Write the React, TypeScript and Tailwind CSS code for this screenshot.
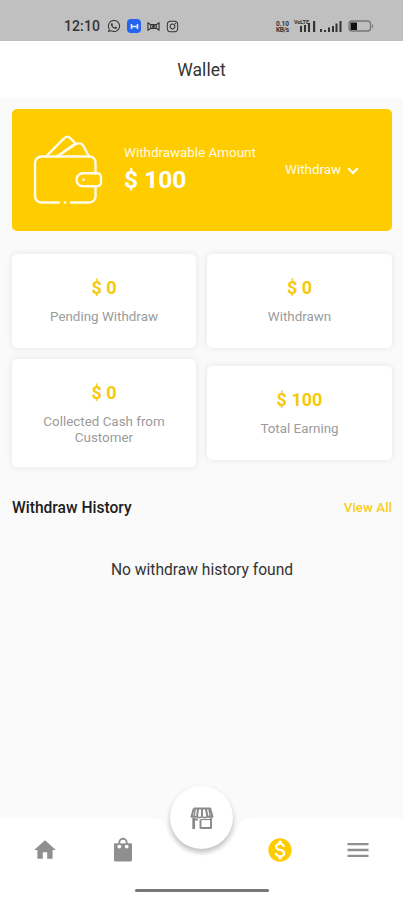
import React from "react";
import { FaInstagram, FaWhatsapp } from "react-icons/fa";
import { MdHome, MdMenu, MdMonetizationOn } from "react-icons/md";

const SignalBars = () => (
  <svg width="70" height="15" viewBox="0 0 70 15" fill="#333">
    <g fontFamily="Roboto, sans-serif" fontWeight="700">
      <text x="1" y="6.5" fontSize="6.5" textLength="13">
        0.10
      </text>
      <text x="1" y="13" fontSize="6.5" textLength="13">
        KB/s
      </text>
      <text x="19" y="5" fontSize="5.5" textLength="15">
        VoLTE
      </text>
    </g>
    <path d="M25 7h2v6h-2zM29 6h2v7h-2zM33 4h2v9h-2zM38 2h2.2v11H38z" />
    <path d="M45 10h2v3h-2zM49 11h2v2h-2zM53 8.5h2V13h-2zM57 7h2v6h-2zM60.500 4.500h2V13h-2zM64.500 2h2v11h-2z" />
  </svg>
);

const StatusBar = () => (
  <div className="flex h-[41px] items-start bg-[#c0c0c0] pl-[64px] pt-[19px] text-[#333]">
    <span className="w-[43px] text-[14px] font-medium leading-[15px] tracking-[0.1px]">
      12:10
    </span>
    <FaWhatsapp size={14} />
    <span className="ml-[6px] flex h-[14px] w-[14px] items-center justify-center rounded-[4px] bg-[#2563f0]">
      <svg width="9" height="7" viewBox="0 0 9 7" fill="none">
        <path
          d="M1.500 1v5M7.500 1v5M1.500 3.500h6"
          stroke="#e4ecff"
          strokeWidth="1.6"
        />
      </svg>
    </span>
    <svg
      width="13"
      height="13"
      viewBox="0 0 14 13"
      fill="none"
      className="ml-[6px] mt-px"
    >
      <path
        d="M1 2v9M13 2v9M1 2.500 4 4.500h6l3-2M1 10.500 4 8.500h6l3 2M4 4.500v4M10 4.500v4"
        stroke="#333"
        strokeWidth="1.200"
      />
      <circle cx="7" cy="6.500" r="1.500" fill="#333" />
    </svg>
    <FaInstagram size={13} className="ml-[6px] mt-px" />
    <div className="ml-[96px]">
      <SignalBars />
    </div>
    <svg width="27" height="15" viewBox="0 0 27 15" className="ml-[3px]">
      <rect
        x="1"
        y="2"
        width="21.500"
        height="10"
        rx="3"
        fill="none"
        stroke="#777"
        strokeWidth="1.400"
      />
      <path d="M2.500 3.500h6.500v7.500H2.500z" fill="#111" />
      <path d="M24 5c1.300.8 1.300 3.700 0 4.500z" fill="#666" />
    </svg>
  </div>
);

const WalletIcon = () => (
  <svg
    width="70"
    height="72"
    viewBox="0 0 70 72"
    fill="none"
    stroke="#fffbea"
    strokeWidth="2.4"
    strokeLinecap="round"
    strokeLinejoin="round"
    className="shrink-0"
  >
    <path d="M26 68.500H8.500a6.500 6.500 0 0 1-6.500-6.500V29a6.500 6.500 0 0 1 6.500-6.500h48a6 6 0 0 1 6 6v11.300M62.500 52.500v10a6 6 0 0 1-6 6H38" />
    <path d="M32 68.500h.2" />
    <path d="M50 39.200h14.500a3.500 3.500 0 0 1 3.500 3.500v6a3.500 3.500 0 0 1-3.500 3.500H50a6.500 6.500 0 0 1 0-13z" />
    <circle cx="50.500" cy="45.700" r=".6" strokeWidth="1.600" />
    <path d="M13 22.500 31 4.300q3.200-3 6.500 0l5 5M24 22.500 42.500 10.300q5-2.300 7.500 1l6 11.200" />
    <path d="M24.500 22.200 41 10.500" />
  </svg>
);

const BagIcon = () => (
  <svg width="24" height="26" viewBox="0 0 24 26">
    <path
      d="M8.300 8.500V5.500a3.700 3.700 0 0 1 7.400 0v3"
      fill="none"
      stroke="#8f8f8f"
      strokeWidth="1.900"
    />
    <path
      d="M4 6.200h16q1 0 1 1V23q0 1.500-1.500 1.500h-15Q3 24.500 3 23V7.200q0-1 1-1z"
      fill="#8f8f8f"
    />
    <circle cx="8.300" cy="9.600" r="1.900" fill="#fff" />
    <circle cx="15.700" cy="9.600" r="1.900" fill="#fff" />
    <path d="M9.800 6.200a2.200 2.200 0 0 1 4.400 0z" fill="#fff" />
  </svg>
);

const StoreIcon = () => (
  <svg width="24" height="24" viewBox="0 0 24 24" fill="none" stroke="#8a8a8a">
    <path
      d="M3.800 2.500h16.400l2.300 8.300H17.500L16 3.200M8 3.200l-1 7.600H1.500L3.800 2.500M12 3v7.500"
      strokeWidth="2"
      strokeLinejoin="round"
    />
    <path
      d="M5.200 3 4 10.500M19 3l1.200 7.500M7 10.700l2.500 1 2.500-1 2.500 1 3-1"
      strokeWidth="1.500"
    />
    <path d="M3.700 12v11" strokeWidth="2.800" />
    <path
      d="M4 13.500h4M10.500 13.500v8.500h10.500V12"
      strokeWidth="1.900"
      strokeLinejoin="round"
    />
    <path d="M10.500 13.500H21" strokeWidth="1.200" />
  </svg>
);

interface StatCardProps {
  amount: string;
  label: string;
}

const StatCard = ({ amount, label }: StatCardProps) => (
  <div className="flex min-h-[94px] flex-col items-center rounded-[5px] bg-white px-5 pb-[22px] pt-[23px] text-center shadow-[0_0_7px_rgba(0,0,0,0.09)]">
    <p className="text-[18px] font-bold leading-[22px] text-[#f6c90e]">
      {amount}
    </p>
    <p className="mt-[10px] text-[13.400px] leading-[15.500px] text-[#9b9b9b]">
      {label}
    </p>
  </div>
);

const BottomNav = () => (
  <nav className="relative h-[82px] bg-white">
    <svg
      width="104"
      height="40"
      viewBox="0 0 104 40"
      className="absolute left-[150px] top-0"
    >
      <path
        d="M0 0h104C93 0 89 4 86 13a36 36 0 0 1-68 0C15 4 11 0 0 0z"
        fill="#fafafa"
      />
    </svg>
    <button className="absolute left-[170px] top-[-32px] flex h-[63px] w-[63px] items-center justify-center rounded-full bg-white shadow-[0_3px_5px_rgba(0,0,0,0.25)]">
      <StoreIcon />
    </button>
    <div className="flex justify-between px-[32px] pt-[19px] text-[#8f8f8f]">
      <div className="flex w-[103px] justify-between">
        <MdHome size={26} />
        <BagIcon />
      </div>
      <div className="flex w-[104px] justify-between">
        <MdMonetizationOn size={28} className="-ml-px -mt-px text-[#fc0]" />
        <MdMenu size={28} className="-mr-px -mt-px" />
      </div>
    </div>
    <div className="absolute left-[135px] top-[71px] h-[3px] w-[134px] rounded-full bg-[#777]" />
  </nav>
);

export default function App() {
  return (
    <div className="flex h-[900px] w-[403px] flex-col overflow-hidden bg-[#fafafa] font-['Roboto',sans-serif]">
      <StatusBar />
      <header className="flex h-[57px] items-center justify-center bg-white pt-px text-[17.500px] text-[#333]">
        Wallet
      </header>

      <main className="flex-1 pl-[12px] pr-[11px] pt-[11px]">
        <section className="flex h-[122px] items-center rounded-[5px] bg-[#fc0] pl-[21px] text-[#fffbea]">
          <WalletIcon />
          <div className="ml-[21px] w-[161px]">
            <p className="text-[13.400px] leading-[16px]">
              Withdrawable Amount
            </p>
            <p className="mt-[4px] text-[24.500px] font-bold leading-[30px] text-white">
              $ 100
            </p>
          </div>
          <button className="flex items-center text-[13.400px]">
            Withdraw
            <svg
              width="12"
              height="8"
              viewBox="0 0 12 8"
              fill="none"
              className="ml-[6px] mt-[2px]"
            >
              <path d="M1.200 1.200 6 6l4.800-4.800" stroke="#fff" strokeWidth="2" />
            </svg>
          </button>
        </section>

        <section className="mt-[23px] grid grid-cols-[184px_185px] items-center gap-x-[11px] gap-y-[11px]">
          <StatCard amount="$ 0" label="Pending Withdraw" />
          <StatCard amount="$ 0" label="Withdrawn" />
          <StatCard amount="$ 0" label="Collected Cash from Customer" />
          <StatCard amount="$ 100" label="Total Earning" />
        </section>

        <div className="mt-[31px] flex items-center justify-between">
          <h2 className="text-[15.600px] font-medium leading-[20px] text-[#1c1c1c]">
            Withdraw History
          </h2>
          <button className="text-[13.400px] font-medium text-[#f8cf1f]">
            View All
          </button>
        </div>
        <p className="mt-[42px] text-center text-[15.600px] leading-[20px] text-[#333]">
          No withdraw history found
        </p>
      </main>

      <BottomNav />
    </div>
  );
}
